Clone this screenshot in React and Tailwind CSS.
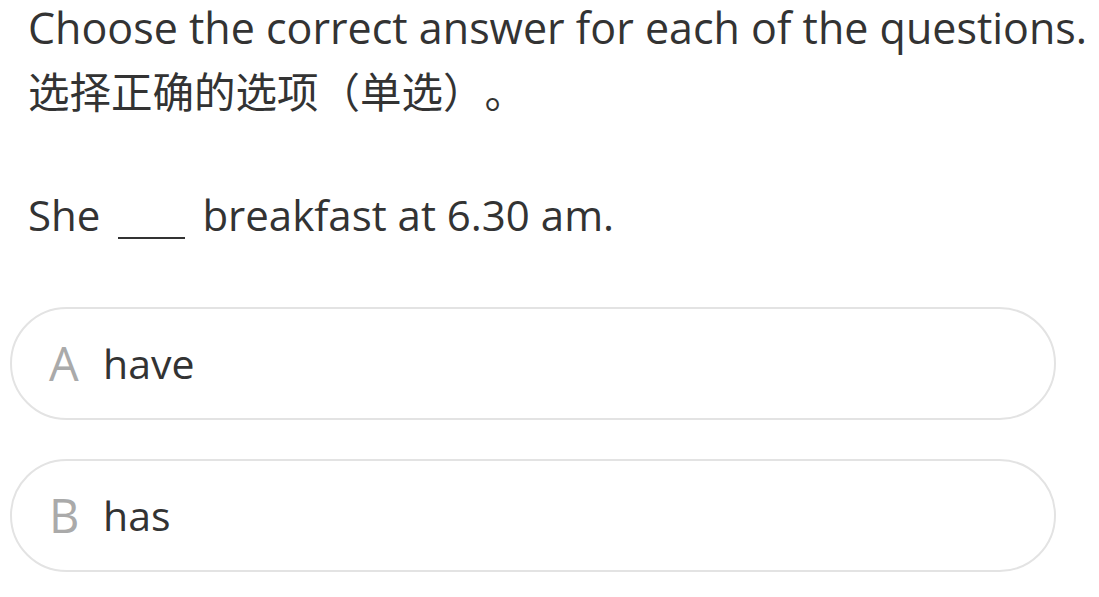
export default function App() {
  const options = [
    { key: 'A', text: 'have' },
    { key: 'B', text: 'has' },
  ];

  return (
    <div
      className="min-h-screen bg-white text-[#333333] pl-[10px] pr-[43px] pt-[3px]"
      style={{ fontFamily: '"Open Sans", "Noto Sans CJK SC", sans-serif' }}
    >
      <div className="pl-[18px]">
        <p className="text-[43px] leading-[50px] whitespace-nowrap">Choose the correct answer for each of the questions.</p>
        <p className="text-[41.5px] leading-[52px] mt-[13px] [text-spacing-trim:space-all]">选择正确的选项（单选）。</p>
        <p className="text-[42px] leading-[50px] mt-[72px] whitespace-nowrap">
          She
          <span className="inline-block w-[67px] border-b-2 border-[#333333] ml-[18px] mr-[17px] translate-y-[8px]"></span>
          breakfast at 6.30 am.
        </p>
      </div>

      <div className="flex flex-col gap-[39px] mt-[67px]">
        {options.map((o) => (
          <div
            key={o.key}
            className="h-[113px] rounded-full border-2 border-[#e3e3e3] flex items-center pl-[37px]"
          >
            <span className="text-[47px] text-[#aaaaaa] w-[54px]">{o.key}</span>
            <span className="text-[41px]">{o.text}</span>
          </div>
        ))}
      </div>
    </div>
  );
}
